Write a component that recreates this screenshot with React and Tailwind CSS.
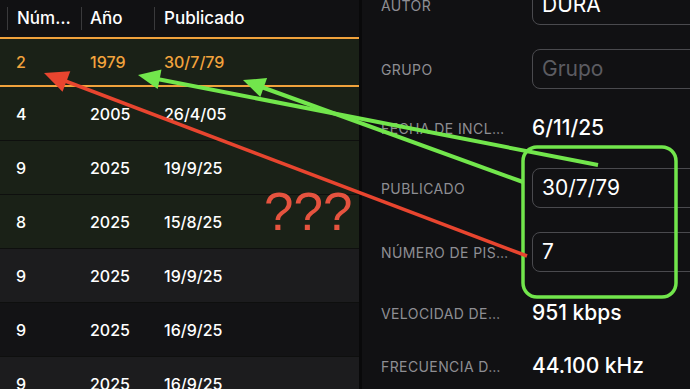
const rows = [
  { n: "4", y: "2005", p: "26/4/05", bg: "bg-[#1a2117]" },
  { n: "9", y: "2025", p: "19/9/25", bg: "bg-[#1a2117]" },
  { n: "8", y: "2025", p: "15/8/25", bg: "bg-[#1a2117]" },
  { n: "9", y: "2025", p: "19/9/25", bg: "bg-[#1c1c1e]" },
  { n: "9", y: "2025", p: "16/9/25", bg: "bg-[#131315]" },
  { n: "9", y: "2025", p: "16/9/25", bg: "bg-[#1c1c1e]" },
];

function Field({ label, h, children }) {
  return (
    <div className={`flex items-center shrink-0 ${h}`}>
      <div className="w-[151px] shrink-0 text-[14px] tracking-[0.4px] text-[#8e8e93] whitespace-nowrap">
        {label}
      </div>
      {children}
    </div>
  );
}

function Box({ children, muted }) {
  return (
    <div
      className={`h-[40px] w-[200px] shrink-0 flex items-center pl-[9px] rounded-lg border-[1.5px] border-[#4a4a4e] text-[21px] ${
        muted ? "text-[#5c5c61]" : "text-white"
      }`}
    >
      {children}
    </div>
  );
}

export default function App() {
  return (
    <div className="relative w-[690px] h-[389px] overflow-hidden flex bg-[#111113] font-['Inter',sans-serif]">
      {/* table */}
      <div className="w-[359px] shrink-0 flex flex-col">
        <div className="h-[37px] shrink-0 flex items-center pl-[7px] bg-[#111113] text-white text-[17px] font-medium">
          <div className="w-[74px] h-[23px] flex items-center border-l border-[#3a3a3c] pl-[9px]">Núm…</div>
          <div className="w-[73px] h-[23px] flex items-center border-l border-[#3a3a3c] pl-[8px]">Año</div>
          <div className="flex-1 h-[23px] flex items-center border-l border-[#3a3a3c] pl-[9px]">Publicado</div>
        </div>
        <div className="h-[50px] shrink-0 flex items-center pl-[16px] bg-[#1a2117] border-y-2 border-[#f0a23c] text-[#f2a33d] text-[16px] font-medium">
          <div className="w-[74px]">2</div>
          <div className="w-[74px]">1979</div>
          <div>30/7/79</div>
        </div>
        {rows.map((r, i) => (
          <div
            key={i}
            className={`h-[54px] shrink-0 flex items-center pl-[16px] border-b border-[#0e0f0e] text-white text-[16px] font-medium ${r.bg}`}
          >
            <div className="w-[74px]">{r.n}</div>
            <div className="w-[74px]">{r.y}</div>
            <div>{r.p}</div>
          </div>
        ))}
      </div>
      <div className="w-[3px] shrink-0 bg-[#09090a]" />

      {/* detail */}
      <div className="flex-1 flex flex-col pl-[19px] mt-[-27px] bg-[#111113]">
        <Field label="AUTOR" h="h-[64px]">
          <Box>DURA</Box>
        </Field>
        <Field label="GRUPO" h="h-[64px]">
          <Box muted>Grupo</Box>
        </Field>
        <Field label="FECHA DE INCL…" h="h-[54px]">
          <div className="text-[21px] text-white font-medium">6/11/25</div>
        </Field>
        <Field label="PUBLICADO" h="h-[66px]">
          <Box>30/7/79</Box>
        </Field>
        <Field label="NÚMERO DE PIS…" h="h-[62px]">
          <Box>7</Box>
        </Field>
        <Field label="VELOCIDAD DE…" h="h-[60px]">
          <div className="text-[21px] text-white font-medium">951 kbps</div>
        </Field>
        <Field label="FRECUENCIA D…" h="h-[46px]">
          <div className="text-[21px] text-white font-medium">44.100 kHz</div>
        </Field>
      </div>

      {/* annotations */}
      <div className="absolute left-[264px] top-[185px] text-[53px] leading-none text-[#e5533f] font-['Liberation_Sans',sans-serif]">
        ???
      </div>
      <svg className="absolute inset-0 pointer-events-none" width="690" height="389" viewBox="0 0 690 389">
        <rect x="523" y="147" width="153" height="150" rx="14" fill="none" stroke="#72e64c" strokeWidth="3.5" />
        <line x1="598" y1="165" x2="152" y2="78" stroke="#72e64c" strokeWidth="4" />
        <polygon points="138,75 161.5,69.4 157.7,89" fill="#72e64c" />
        <line x1="523" y1="182" x2="256" y2="85" stroke="#72e64c" strokeWidth="4" />
        <polygon points="243,80 267.1,78.1 260.3,96.9" fill="#72e64c" />
        <line x1="527" y1="256" x2="60" y2="79" stroke="#e8452f" strokeWidth="3.5" />
        <polygon points="44,73 70.3,71.2 62.5,91.8" fill="#e8452f" />
      </svg>
    </div>
  );
}
